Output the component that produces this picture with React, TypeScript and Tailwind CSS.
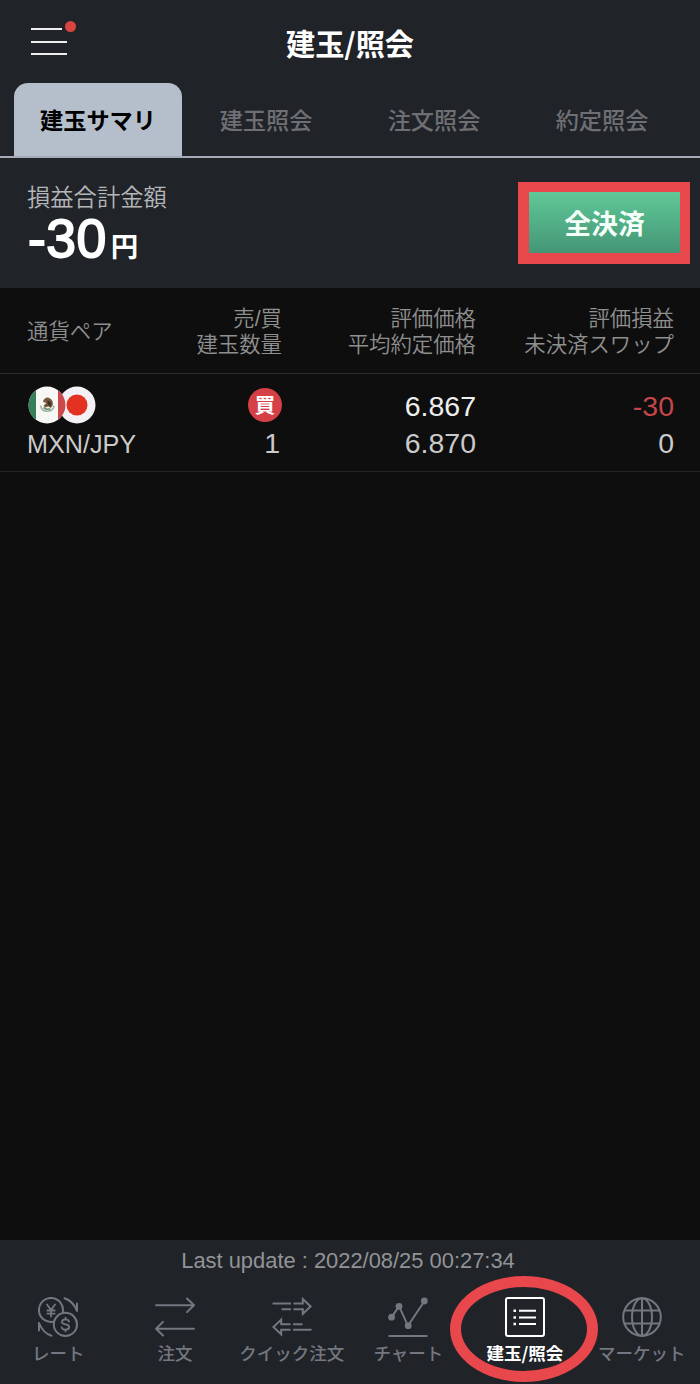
import clsx from "clsx";
import type { ReactNode } from "react";

const tabs = ["建玉サマリ", "建玉照会", "注文照会", "約定照会"];

const RateIcon = () => (
    <svg width="40" height="40" viewBox="0 0 40 40" fill="none" stroke="currentColor" strokeWidth="2" strokeLinecap="round" strokeLinejoin="round">
        <path d="M14.800 24.800A12 12 0 1 1 24.800 14.800" />
        <circle cx="27.400" cy="27.400" r="11.600" />
        <path d="M9 7.500l4 5.500 4-5.500M13 13v6.500M9.300 13.500h7.400M9.300 16.600h7.400" strokeWidth="1.800" />
        <path d="M31 24.600c-.4-1.500-1.800-2.200-3.500-2.200-2 0-3.500.9-3.500 2.500 0 3.600 7.200 1.500 7.200 5.200 0 1.700-1.600 2.600-3.700 2.600-2 0-3.500-.8-3.800-2.400M27.500 20.700v1.500M27.500 32.800v1.500" strokeWidth="1.800" />
        <path d="M26.500 1.300c6 1.800 9.700 5.700 12.500 12.700V6.500" />
        <path d="M13.500 38.700C7.500 36.900 3.800 33 1 26v7.500" />
    </svg>
);

const OrderIcon = () => (
    <svg width="40" height="40" viewBox="0 0 40 40" fill="none" stroke="currentColor" strokeWidth="2" strokeLinecap="round" strokeLinejoin="round">
        <path d="M1 8.300h38M32 1.500l7 6.800-7 6.800" />
        <path d="M39 31.700H1M8 24.900l-7 6.800 7 6.800" />
    </svg>
);

const QuickOrderIcon = () => (
    <svg width="40" height="40" viewBox="0 0 40 40" fill="none" stroke="currentColor" strokeWidth="2">
        <path d="M.5 6.600H19M9.500 12.200H19M21.500 6.600h9.300V2l7.800 7.400-7.800 7.400v-4.600h-9.300" />
        <path d="M39.500 32.700H21M30.500 27.200H21M18.500 32.700H9.200v4.800l-7.800-7.500 7.800-7.500v4.700h9.300" />
    </svg>
);

const ChartIcon = () => (
    <svg width="40" height="40" viewBox="0 0 40 40" fill="none" stroke="currentColor" strokeWidth="2">
        <path d="M3.500 20.400L11 9.200l9 19.600L36.500 4M.5 39h39" />
        <g fill="currentColor" stroke="none">
            <circle cx="3.600" cy="20.200" r="3.400" />
            <circle cx="11" cy="9.300" r="3.400" />
            <circle cx="20.200" cy="28.700" r="3.400" />
            <circle cx="36.300" cy="4" r="3.400" />
        </g>
    </svg>
);

const ListIcon = () => (
    <svg width="40" height="40" viewBox="0 0 40 40" fill="none" stroke="currentColor" strokeWidth="2">
        <rect x="1" y="1" width="38" height="38" rx="2" />
        <path d="M14 13.700h17M14 20.400h17M14 27.100h17" />
        <path d="M8.500 13.700H11M8.500 20.400H11M8.500 27.100H11" strokeWidth="2.500" />
    </svg>
);

const MarketIcon = () => (
    <svg width="40" height="40" viewBox="0 0 40 40" fill="none" stroke="currentColor" strokeWidth="2">
        <circle cx="20" cy="20" r="18.800" />
        <ellipse cx="20" cy="20" rx="10" ry="18.800" />
        <path d="M20 1v38M3 13.500h34M3 26.500h34" />
    </svg>
);

const MexicoFlag = () => (
    <svg width="38" height="38" viewBox="0 0 38 38">
        <clipPath id="mx">
            <circle cx="19" cy="19" r="18.500" />
        </clipPath>
        <g clipPath="url(#mx)">
            <path fill="#f7f7f5" d="M0 0h38v38H0z" />
            <path fill="#37805a" d="M0 0h8v38H0z" />
            <path fill="#c9494c" d="M30 0h8v38h-8z" />
        </g>
        <path d="M12.500 19.500c1 4.500 4 5.800 7 5.800s5.800-1.500 6.700-5.500" fill="none" stroke="#a5b49c" strokeWidth="1.600" />
        <path d="M15 16c.5-3 3-4.800 5.500-4.300 3 .8 4.800 3.500 4.300 7.500l-2 2.800-2.500-1.500-3 1-1.800-2 3-2.500z" fill="#77583b" />
        <path d="M19.500 14l4 3-1 3.500-3-2z" fill="#3e3226" />
        <path d="M15.500 21.500l3 1.800 4-.3" fill="none" stroke="#5d8a7c" strokeWidth="1.500" />
    </svg>
);

const JapanFlag = () => (
    <svg width="38" height="38" viewBox="0 0 38 38">
        <circle cx="19" cy="19" r="18.500" fill="#f3f1f5" />
        <circle cx="19" cy="19" r="10.500" fill="#e33122" />
    </svg>
);

const navItems: { label: string; icon: ReactNode; active?: boolean }[] = [
    { label: "レート", icon: <RateIcon /> },
    { label: "注文", icon: <OrderIcon /> },
    { label: "クイック注文", icon: <QuickOrderIcon /> },
    { label: "チャート", icon: <ChartIcon /> },
    { label: "建玉/照会", icon: <ListIcon />, active: true },
    { label: "マーケット", icon: <MarketIcon /> },
];

const Header = () => (
    <header className="grid h-[83px] grid-cols-[1fr_auto_1fr] items-center px-[31px]">
        <div className="relative flex w-9 flex-col gap-[10.500px]">
            <span className="h-0.5 w-[31px] bg-[#eeeeee]" />
            <span className="h-0.5 w-9 bg-[#eeeeee]" />
            <span className="h-0.5 w-9 bg-[#eeeeee]" />
            <span className="absolute -top-[7px] left-[34px] size-[11px] rounded-full bg-[#d8443f]" />
        </div>
        <h1 className="font-['Noto_Sans_CJK_JP',sans-serif] text-[29.200px] leading-9 font-bold text-white">建玉/照会</h1>
    </header>
);

const Tabs = () => (
    <nav className="flex h-[75px] border-b-2 border-[#a3abb6] px-3.5">
        {tabs.map((tab, i) => (
            <button
                key={tab}
                className={clsx(
                    "flex w-[168px] items-center justify-center rounded-t-[14px] pt-1 text-[23.200px]",
                    i === 0 ? "bg-[#b5becb] font-bold text-black" : "font-medium text-[#6e6f73]"
                )}
            >
                {tab}
            </button>
        ))}
    </nav>
);

const Summary = () => (
    <section className="flex h-[130px] items-start justify-between pt-6 pr-2.5 pl-[27px]">
        <div>
            <p className="text-[23.300px] leading-8 font-[350] text-[#b5b6b8]">損益合計金額</p>
            <p className="-mt-1 flex items-baseline pl-px leading-[58px] text-white">
                <span className="text-[53.500px] tracking-[0.500px] [-webkit-text-stroke:1.800px_white]">-30</span>
                <span className="ml-1 text-[27.500px] font-bold">円</span>
            </p>
        </div>
        <div className="h-[82px] w-[172px] bg-[#e8474c] pt-2.5 pr-2.5 pb-[11px] pl-[11px]">
            <button className="flex h-full w-full items-center justify-center bg-linear-to-b from-[#60c897] to-[#459676] pt-1.5 text-[26.800px] font-bold text-[#f4fffa]">
                全決済
            </button>
        </div>
    </section>
);

const Positions = () => (
    <main className="flex-1 bg-[#0e0e0e]">
        <div className="grid h-[86px] grid-cols-[147px_108px_194px_198px] items-center border-b border-[#2a2a2a] pt-[3px] pl-[27px] text-right text-[21.400px] leading-[26.500px] font-[350] text-[#8f8f8f]">
            <div className="text-left">通貨ペア</div>
            <div>売/買<br />建玉数量</div>
            <div>評価価格<br />平均約定価格</div>
            <div>評価損益<br />未決済スワップ</div>
        </div>
        <div className="grid h-[98px] grid-cols-[147px_108px_194px_198px] border-b border-[#242424] pt-3.5 pl-[27px] text-right text-[28.500px] leading-[37px] text-[#cacaca]">
            <div className="text-left text-[25.200px]">
                <div className="flex h-[37px] items-center pb-[3px] pl-px">
                    <span className="z-10"><MexicoFlag /></span>
                    <span className="-ml-2"><JapanFlag /></span>
                </div>
                <div className="pt-px">MXN/JPY</div>
            </div>
            <div>
                <div className="flex h-[37px] items-center justify-end pb-1">
                    <span className="flex size-[34px] items-center justify-center rounded-full bg-[#d44045] pt-0.5 text-[20.500px] font-bold text-white">買</span>
                </div>
                <div className="pr-0.5">1</div>
            </div>
            <div>
                <div className="text-[#eeeeee]">6.867</div>
                <div>6.870</div>
            </div>
            <div>
                <div className="text-[#c3464a]">-30</div>
                <div>0</div>
            </div>
        </div>
    </main>
);

const Footer = () => (
    <footer className="h-36 pt-1.5">
        <p className="pr-1 text-center text-[21.900px] leading-[30px] text-[#929397]">Last update : 2022/08/25 00:27:34</p>
        <nav className="mt-[21px] grid grid-cols-6">
            {navItems.map(({ label, icon, active }) => (
                <button
                    key={label}
                    className={clsx(
                        "relative flex flex-col items-center font-['Noto_Sans_CJK_JP',sans-serif]",
                        active ? "font-bold text-white" : "font-medium text-[#747780]"
                    )}
                >
                    {icon}
                    <span className="mt-1 text-[17.500px] leading-6 whitespace-nowrap">{label}</span>
                    {active && (
                        <span className="absolute -top-[21px] left-1/2 h-[106px] w-[148px] -translate-x-[75px] rounded-[50%] border-[11px] border-[#e8474c]" />
                    )}
                </button>
            ))}
        </nav>
    </footer>
);

const App = () => {
    return (
        <div className="flex h-[1384px] w-[700px] flex-col overflow-hidden bg-[#202328] font-['Liberation_Sans','Noto_Sans_CJK_JP',sans-serif]">
            <Header />
            <Tabs />
            <Summary />
            <Positions />
            <Footer />
        </div>
    );
};

export default App;
